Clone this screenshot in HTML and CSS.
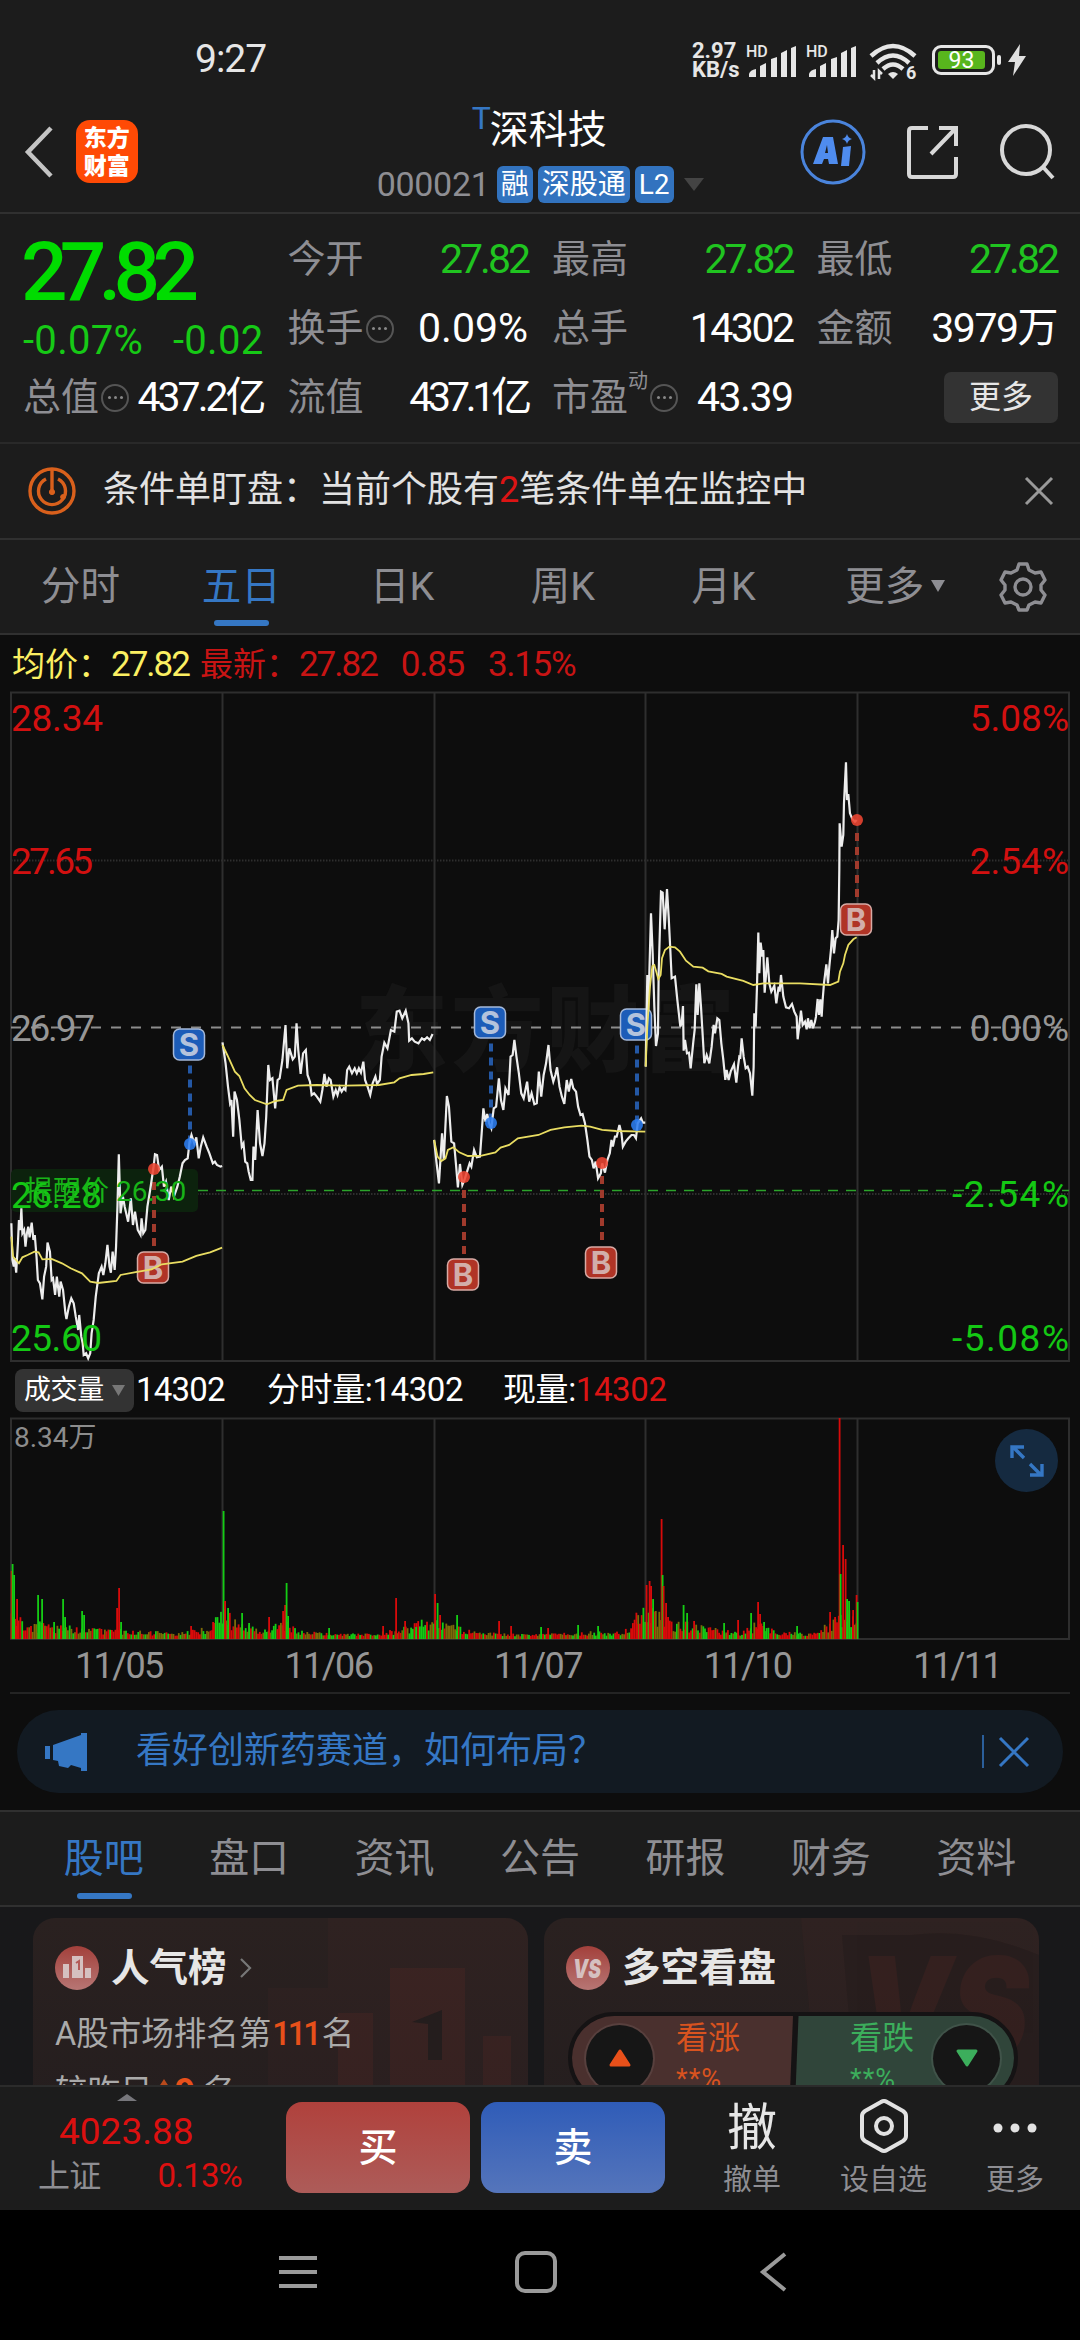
FILE: index.html
```html
<!DOCTYPE html>
<html lang="zh-CN">
<head>
  <meta charset="UTF-8" />
  <title>深科技 000021</title>
  <link rel="stylesheet" href="styles.css">
</head>
<body>
  <div class="phone">
    <div class="status-bar">
      <span class="time">9:27</span>
      <div class="status-icons">
        <div class="net-speed"><span>2.97</span><span>KB/s</span></div>
        <svg width="50" height="38" viewBox="0 0 50 38" fill="#e6e6e6">
          <text x="-2" y="16" class="hd">HD</text>
          <path d="M1 36v-3q1-4 7-5v8zM12 36V25l6-3v14zM23 36V18l6-2v20zM33 36V12l6-3v27zM43 36V7l5-2v31z"/>
        </svg>
        <svg class="sim2" width="50" height="38" viewBox="0 0 50 38" fill="#e6e6e6">
          <text x="-2" y="16" class="hd">HD</text>
          <path d="M1 36v-3q1-4 7-5v8zM12 36V25l6-3v14zM23 36V18l6-2v20zM33 36V12l6-3v27zM43 36V7l5-2v31z"/>
        </svg>
        <svg class="wifi" width="48" height="38" viewBox="0 0 48 38" fill="none" stroke="#e6e6e6" stroke-width="4.500">
          <path d="M2 15Q24-5 46 15M8 22Q24 7 40 22M14 28Q24 19 34 28"/>
          <path d="M24 38l-5-5q5-4 10 0z" fill="#e6e6e6" stroke="none"/>
          <path d="M5 29v8l-3-3M10 38v-8l3 3" stroke-width="2.500"/>
          <text x="37" y="38" class="wifi-gen">6</text>
        </svg>
        <div class="battery"><span>93</span></div>
        <svg class="bolt" width="18" height="32" viewBox="0 0 18 32" fill="#e0e0e0"><path d="M12 0L0 18h7L5 32 18 12h-7z"/></svg>
      </div>
    </div>

    <div class="header">
      <svg class="back" width="30" height="52" viewBox="0 0 30 52" fill="none" stroke="#c4c4c4" stroke-width="4.5"><path d="M27 2L4 26l23 24"/></svg>
      <div class="logo"><span>东方</span><span>财富</span></div>
      <div class="title">
        <div class="name"><sup>T</sup>深科技</div>
        <div class="code">
          <span class="num">000021</span>
          <span class="tag">融</span><span class="tag">深股通</span><span class="tag">L2</span>
          <svg class="caret" width="20" height="13" viewBox="0 0 20 13" fill="#444"><path d="M0 0h20L10 13z"/></svg>
        </div>
      </div>
      <div class="tools">
        <svg width="66" height="66" viewBox="0 0 66 66">
          <circle cx="33" cy="33" r="31" fill="none" stroke="#4a84dc" stroke-width="3"/>
          <path d="M23 18h10l5 27h-9l-1-5h-4l-2 5h-9zM27 26l-2 8h3z" fill="#4f8cee" fill-rule="evenodd"/>
          <path d="M43 28l8-1-2 20h-8z" fill="#4f8cee"/>
          <path d="M47 15q1 4 5 5-4 1-5 5-1-4-5-5 4-1 5-5z" fill="#4f8cee"/>
        </svg>
        <svg width="54" height="56" viewBox="0 0 54 56" fill="none" stroke="#d8d8d8" stroke-width="4">
          <path d="M22 4H6q-3 0-3 3v43q0 3 3 3h41q3 0 3-3V33M33 4h17v18M50 4L25 30"/>
        </svg>
        <svg width="56" height="58" viewBox="0 0 56 58" fill="none" stroke="#d8d8d8" stroke-width="4">
          <circle cx="26" cy="27" r="24"/><path d="M43 44l10 11"/>
        </svg>
      </div>
    </div>

    <div class="quote">
      <div class="price-main">
        <div class="price">27.82</div>
        <div class="change"><span>-0.07%</span><span>-0.02</span></div>
      </div>
      <div class="cell"><label>今开</label><b class="green n3">27.82</b></div>
      <div class="cell"><label>最高</label><b class="green n3">27.82</b></div>
      <div class="cell"><label>最低</label><b class="green n3">27.82</b></div>
      <div class="cell"><label>换手<i class="info"></i></label><b>0.09%</b></div>
      <div class="cell"><label>总手</label><b class="n2">14302</b></div>
      <div class="cell"><label>金额</label><b class="n1">3979万</b></div>
      <div class="cell"><label>总值<i class="info"></i></label><b class="n3">437.2亿</b></div>
      <div class="cell"><label>流值</label><b class="n4">437.1亿</b></div>
      <div class="cell"><label>市盈<sup>动</sup><i class="info"></i></label><b class="n1">43.39</b></div>
      <div class="cell end"><span class="more-btn">更多</span></div>
    </div>

    <div class="alert">
      <svg width="48" height="48" viewBox="0 0 48 48" fill="none" stroke="#d9601c" stroke-width="3.4">
        <circle cx="24" cy="24" r="22"/>
        <path d="M18 12a13.5 13.5 0 1 0 12 0M24 2v22"/>
        <circle cx="24" cy="25" r="2.6" fill="#d9601c" stroke-width="1"/><circle cx="35" cy="30" r="2.4" fill="#d9601c" stroke-width="1"/>
      </svg>
      <p>条件单盯盘：当前个股有<em>2</em>笔条件单在监控中</p>
      <svg width="28" height="28" viewBox="0 0 28 28" stroke="#999" stroke-width="3"><path d="M1 1l26 26M27 1L1 27"/></svg>
    </div>

    <div class="period-tabs">
      <span>分时</span><span class="on">五日</span><span>日K</span><span>周K</span><span>月K</span>
      <span class="more">更多<svg width="14" height="12" viewBox="0 0 14 12" fill="#8e8e93"><path d="M0 0h14L7 12z"/></svg></span>
      <svg class="gear" width="48" height="50" viewBox="0 0 48 50" fill="none" stroke="#8e8e93" stroke-width="3.4" stroke-linejoin="round">
        <path d="M20 2h8l2 6 6 3 6-1 4 8-4 5v5l4 5-4 8-6-1-6 3-2 5h-8l-2-5-6-3-6 1-4-8 4-5v-5l-4-5 4-8 6 1 6-3z"/>
        <circle cx="24" cy="25" r="8"/>
      </svg>
    </div>

    <div class="chart-area">
      <div class="legend">
        <span class="yellow">均价：<b>27.82</b></span>
        <span class="red">最新：<b>27.82</b><b>0.85</b><b>3.15%</b></span>
      </div>
      <svg class="price-chart" width="1080" height="670" viewBox="0 692 1080 670">
        <text x="355" y="1064" class="watermark" textLength="380">东方财富</text>
        <g class="grid">
          <path d="M10 692.5H1070M10 1361H1070M11 692V1361M222.5 692V1361M434.5 692V1361M645.5 692V1361M857.5 692V1361M1069 692V1361"/>
          <path d="M11 860.5H1069M11 1194H1069" stroke-dasharray="1.5 1.5"/>
        </g>
        <path d="M11 1027.5H1069" stroke="#8c8c8c" stroke-width="2" stroke-dasharray="10 10"/>
        <rect x="11" y="1169" width="187" height="43" rx="5" fill="#0c220d"/>
        <path d="M198 1190.5H1069" stroke="#2ba32b" stroke-width="1.4" stroke-dasharray="10 8"/>

        <g class="marks" id="marks"></g>
        <g class="price-line">
          <polyline transform="translate(0 1000) scale(.3444 .3333)" points="33,670 36,780 40,800 43,775 47,818 52,730 55,660 59,690 62,625 65,700 70,690 74,740 78,700 82,680 86,712 92,668 97,720 101,705 106,770 110,840 116,850 123,898 128,830 134,800 138,728 145,755 150,840 154,835 160,885 165,830 172,890 176,845 183,870 190,940 193,957 200,920 207,895 214,910 220,950 227,990 230,945 236,1010 240,1030 243,1065 250,1060 256,1075 262,1060 266,1000 272,960 278,890 287,820 295,800 300,825 306,790 312,735 318,800 322,818 327,755 333,810 337,740 341,620 345,463 350,640 357,590 362,620 372,665 380,595 386,675 392,635 400,690 408,705 411,655 416,700 422,690 428,620 436,570 446,500 450,463 456,465 462,510 470,500 476,560 482,545 490,600 497,560 505,590 515,560 522,530 530,490 537,480 545,475 550,430 556,405 564,430 570,412 577,475 583,440 590,412 600,440 608,460 618,490 624,485 630,495 640,500 645,498"/>
          <polyline transform="translate(0 1000) scale(.3444 .3333)" points="646,127 655,190 662,260 668,310 672,300 677,410 681,275 688,300 695,360 702,440 707,430 712,485 718,490 722,515 728,540 733,540 736,440 741,480 748,330 755,430 762,468 768,430 773,350 779,195 784,240 791,235 799,325 806,240 812,235 820,180 829,75 834,205 840,145 850,178 856,170 861,70 866,150 873,222 880,160 888,150 893,225 900,245 905,285 912,280 920,290 930,305 936,270 942,222 948,260 955,235 960,240 968,290 975,270 980,285 986,262 992,275 998,265 1003,270 1008,210 1014,200 1022,220 1030,205 1036,220 1042,205 1048,218 1055,185 1060,240 1068,262 1075,285 1082,250 1090,230 1095,252 1103,240 1108,170 1116,128 1125,145 1135,90 1145,95 1152,35 1160,32 1168,55 1178,32 1186,70 1188,122 1196,115 1204,125 1215,130 1225,115 1232,120 1240,112 1248,120 1256,102"/>
          <polyline transform="translate(430 960) scale(.3444 .3333)" points="12,540 18,600 26,670 35,520 40,600 49,408 55,440 62,545 70,550 76,620 81,682 87,612 94,675 100,660 106,640 115,610 120,620 128,570 136,592 145,590 150,520 155,445 161,485 166,462 172,490 178,505 185,445 192,440 200,355 206,420 213,450 219,385 228,405 234,290 240,285 245,240 251,290 258,340 265,400 272,415 282,365 288,425 295,400 303,433 310,430 316,335 323,410 330,345 337,310 344,255 350,330 358,365 364,345 369,322 376,380 383,410 390,432 397,360 403,395 410,357 416,385 424,395 430,440 437,465 443,462 450,490 457,540 463,590 470,600 475,625 481,605 488,655 496,640 500,610 508,638 515,600 522,580 527,540 531,560 537,530 542,530 550,495 556,520 560,560 568,545 576,535 585,525 592,525 598,535 603,490 613,475 618,488 625,488"/>
          <polyline transform="translate(600 720) scale(.3333)" points="137,1040 142,765 145,870 153,580 158,700 163,860 168,978 174,940 176,760 183,515 188,518 194,628 201,507 206,590 211,690 215,775 225,770 232,840 241,920 245,910 249,858 251,992 255,960 261,1000 267,998 272,1045 280,965 284,930 289,793 293,885 298,790 303,860 313,1030 320,1005 328,1030 335,980 341,915 345,940 352,895 358,900 364,970 370,1020 376,1080 380,1050 386,1080 392,1055 402,1033 409,1088 414,1040 418,1010 421,1012 425,955 431,1010 437,1045 443,1040 450,1060 457,1127 461,1040 463,880 467,920 471,800 475,638 478,760 482,668 487,710 490,690 494,818 502,712 508,790 514,815 523,797 529,850 536,800 539,815 543,765 550,830 558,862 567,865 576,852 583,875 590,890 593,958 600,900 603,872 608,915 615,905 620,928 624,895 629,925 634,900 639,925 645,905 648,890 653,837 657,885 661,838 665,890 668,840 672,790 679,733 684,790 688,740 693,690 697,630 702,700 707,655 712,650 716,600 718,450 719,310 725,380 730,345 732,250 738,127 741,240 745,222 750,280 757,297 765,305 770,300"/>
        </g>
        <g class="avg-line">
          <polyline transform="translate(0 1000) scale(.3444 .3333)" points="33,710 38,770 55,790 65,772 80,765 100,755 112,757 123,778 150,777 180,790 205,805 238,820 262,845 285,849 338,843 350,825 390,817 440,808 470,793 530,785 570,768 610,757 645,743"/>
          <polyline transform="translate(0 1000) scale(.3444 .3333)" points="646,135 660,165 682,215 695,228 710,265 725,285 740,300 775,313 800,303 822,300 832,270 865,257 920,255 1000,257 1100,255 1145,247 1160,235 1195,225 1230,222 1258,217"/>
          <polyline transform="translate(430 960) scale(.3444 .3333)" points="12,540 22,590 33,603 45,595 52,570 68,562 85,577 110,588 150,587 190,577 205,563 230,555 255,535 315,525 350,510 390,502 440,497 465,500 500,510 540,513 625,515"/>
          <polyline transform="translate(600 720) scale(.3333)" points="137,1040 142,920 150,800 157,738 163,735 175,777 182,765 186,715 195,690 208,680 225,682 240,695 258,722 280,740 308,743 325,754 365,762 380,770 430,783 460,795 490,790 600,790 690,795 715,785 720,755 730,730 735,705 745,675 760,658 770,652"/>
        </g>
        <g id="dots"></g>

        <g class="axis">
          <text x="11" y="731" class="up" textLength="92">28.34</text>
          <text x="11" y="874" class="up" textLength="82">27.65</text>
          <text x="11" y="1041" class="flat" textLength="84">26.97</text>
          <text x="11" y="1208" class="down" textLength="91">26.28</text>
          <text x="11" y="1351" class="down" textLength="91">25.60</text>
          <text x="25" y="1201" class="remind">提醒价 26.30</text>
          <g text-anchor="end">
            <text x="1069" y="731" class="up">5.08%</text>
            <text x="1069" y="874" class="up">2.54%</text>
            <text x="1069" y="1041" class="flat">0.00%</text>
            <text x="1069" y="1207" class="down" textLength="117">-2.54%</text>
            <text x="1069" y="1351" class="down" textLength="117">-5.08%</text>
          </g>
        </g>
      </svg>

      <div class="volume-legend">
        <span class="select">成交量<svg width="13" height="11" viewBox="0 0 13 11" fill="#777"><path d="M0 0h13L6.500 11z"/></svg></span>
        <span class="v1">14302</span>
        <span class="v2">分时量:14302</span>
        <span>现量:<em>14302</em></span>
      </div>
      <div class="volume">
        <svg width="1080" height="222" viewBox="0 1418 1080 222">
          <path class="grid" d="M10 1418.500H1070M10 1639H1070M11 1418V1639M222.500 1418V1639M434.500 1418V1639M645.500 1418V1639M857.500 1418V1639M1069 1418V1639"/>
          <g id="bars"></g>
          <text x="14" y="1447" class="vol-max">8.34万</text>
        </svg>
        <span class="expand">
          <svg width="34" height="34" viewBox="0 0 34 34" fill="none" stroke="#3577c4" stroke-width="3.400"><path d="M2 14V3h12M3 3l11 11M32 20v11H20M31 31L20 20"/></svg>
        </span>
      </div>
      <div class="dates"><span>11/05</span><span>11/06</span><span>11/07</span><span>11/10</span><span>11/11</span></div>

      <div class="banner">
        <svg width="42" height="38" viewBox="0 0 42 38" fill="#3577c4"><path d="M0 13h5v13H0zM8 12L36 2V0h6v38h-6v-3l-10-3-3 3-9-2-1-5-5-1z"/></svg>
        <p>看好创新药赛道，如何布局？</p>
        <svg class="close" width="48" height="34" viewBox="0 0 48 34" stroke="#3577c4" fill="none"><path d="M1 0v33" stroke-width="1.500"/><path d="M18 3l28 28M46 3L18 31" stroke-width="3"/></svg>
      </div>
    </div>

    <div class="info-tabs">
      <span class="on">股吧</span><span>盘口</span><span>资讯</span><span>公告</span><span>研报</span><span>财务</span><span>资料</span>
    </div>

    <div class="cards">
      <div class="card">
        <svg class="card-bg" width="260" height="168" viewBox="0 0 260 168"><path d="M60 0h200v168H0V70h60z" fill="#ff6a50" opacity=".025"/><path d="M70 95h35v73H70zM122 50h75v118h-75zM215 118h28v50h-28z" fill="#ff4030" opacity=".06"/><path d="M144 104l30-12v50h-14v-36z" fill="#241d1d"/></svg>
        <div class="card-title">
          <svg width="44" height="44" viewBox="0 0 44 44"><circle cx="22" cy="22" r="22" fill="url(#rg)"/><path d="M8 18h6v14H8zM17 10h11v22H17zM30 22h6v10h-6z" fill="#d5c0c0"/><path d="M21 17l3-2v9" fill="none" stroke="#b45b58" stroke-width="2"/>
            <defs><linearGradient id="rg" x2="0" y2="1"><stop stop-color="#a3403b"/><stop offset="1" stop-color="#b77674"/></linearGradient></defs></svg>
          <h3>人气榜</h3>
          <svg width="13" height="20" viewBox="0 0 13 20" fill="none" stroke="#777" stroke-width="2.200"><path d="M2 1l9 9-9 9"/></svg>
        </div>
        <p>A股市场排名第<em class="rank">111</em>名</p>
        <p class="second">较昨日<svg width="22" height="26" viewBox="0 0 22 26" fill="#b84a1c"><path d="M11 0l11 17h-6v9H6v-9H0z"/></svg><em class="big">9</em> 名</p>
      </div>
      <div class="card">
        <svg class="card-bg" width="260" height="168" viewBox="0 0 260 168"><path d="M22 0h238v168H37z" fill="#ff6a50" opacity=".025"/><path d="M63 17h70q60-8 127 20v131H76z" fill="#241d1d" opacity=".6"/><text x="78" y="140" class="vs-bg" textLength="172" lengthAdjust="spacingAndGlyphs">VS</text></svg>
        <div class="card-title">
          <svg width="44" height="44" viewBox="0 0 44 44"><circle cx="22" cy="22" r="22" fill="url(#rg)"/><text x="7" y="32" class="vs" textLength="28" lengthAdjust="spacingAndGlyphs">VS</text></svg>
          <h3>多空看盘</h3>
        </div>
        <div class="vote">
          <div class="bull"><i><svg width="22" height="18" viewBox="0 0 22 18"><path d="M11 2L20 16H2z" fill="#e8501a" stroke="#e8501a" stroke-width="3" stroke-linejoin="round"/></svg></i><span>看涨<br><small>**%</small></span></div>
          <div class="bear"><span>看跌<br><small>**%</small></span><i><svg width="22" height="18" viewBox="0 0 22 18"><path d="M11 16L20 2H2z" fill="#3cae5c" stroke="#3cae5c" stroke-width="3" stroke-linejoin="round"/></svg></i></div>
        </div>
      </div>
    </div>

    <div class="bottom-bar">
      <div class="index">
        <svg width="20" height="7" viewBox="0 0 20 7" fill="#77777c"><path d="M0 7h20L10 0z"/></svg>
        <div class="index-val">4023.88</div>
        <div class="index-row"><span>上证</span><b>0.13%</b></div>
      </div>
      <div class="trade buy">买</div>
      <div class="trade sell">卖</div>
      <div class="action a1"><span class="glyph">撤</span><label>撤单</label></div>
      <div class="action a2">
        <svg width="50" height="54" viewBox="0 0 50 54" fill="none" stroke="#e2e2e2" stroke-width="4" stroke-linejoin="round"><path d="M22 2q3-2 6 0l16 9q3 2 3 5v20q0 3-3 5l-16 9q-3 2-6 0L6 41q-3-2-3-5V16q0-3 3-5z"/><circle cx="25" cy="26" r="8"/></svg>
        <label>设自选</label>
      </div>
      <div class="action a3">
        <svg width="44" height="54" viewBox="0 0 44 54" fill="#e2e2e2"><circle cx="5" cy="28" r="4.500"/><circle cx="22" cy="28" r="4.500"/><circle cx="39" cy="28" r="4.500"/></svg>
        <label>更多</label>
      </div>
    </div>

    <div class="nav-bar">
      <svg width="38" height="34" viewBox="0 0 38 34" stroke="#9a9a9a" stroke-width="4"><path d="M0 3h38M0 17h38M0 31h38"/></svg>
      <svg class="home" width="42" height="42" viewBox="0 0 42 42" fill="none" stroke="#9a9a9a" stroke-width="4"><rect x="2" y="2" width="38" height="38" rx="8"/></svg>
      <svg width="27" height="40" viewBox="0 0 27 40" fill="none" stroke="#9a9a9a" stroke-width="4"><path d="M25 2L3 20l22 18"/></svg>
    </div>
  </div>

  <script src="chart.js"></script>
</body>
</html>
```

FILE: styles.css
```css
* {
  box-sizing: border-box;
}

body {
  margin: 0;
  background: #1c1c1c;
  color: #fff;
  font-family: Roboto, "Noto Sans CJK SC", sans-serif;
  line-height: 1.2;
}

svg {
  display: block;
  flex: none;
  overflow: visible;
}

p, h3 {
  margin: 0;
}

em, i {
  font-style: normal;
}

b {
  font-weight: 400;
}

.phone {
  width: 1080px;
  height: 2340px;
  overflow: hidden;
  display: flex;
  flex-direction: column;
}

.phone > div {
  flex: none;
}

/* status bar */
.status-bar {
  height: 100px;
  padding: 19px 54px 0 195px;
  display: flex;
  align-items: center;
  justify-content: space-between;
}

.time {
  font-size: 39px;
  letter-spacing: -1px;
  color: #e6e6e6;
}

.status-icons {
  display: flex;
  align-items: center;
  color: #e6e6e6;
}

.net-speed {
  display: flex;
  flex-direction: column;
  width: 56px;
  font-size: 22px;
  font-weight: 700;
  line-height: 19px;
}

.hd {
  font-size: 16px;
  font-weight: 500;
}

.sim2 {
  margin-left: 10px;
}

.wifi {
  margin-left: 11px;
}

.wifi-gen {
  font-size: 18px;
  font-weight: 700;
  fill: #e6e6e6;
  stroke: none;
}

.battery {
  position: relative;
  width: 63px;
  height: 30px;
  margin-left: 15px;
  padding: 3px;
  border: 3px solid #e6e6e6;
  border-radius: 9px;
}

.battery::after {
  content: "";
  position: absolute;
  right: -9px;
  top: 7px;
  width: 4px;
  height: 10px;
  border-radius: 2px;
  background: #e6e6e6;
}

.battery span {
  display: block;
  height: 18px;
  width: 47px;
  background: #58b51d;
  border-radius: 3px;
  color: #fff;
  font-size: 23px;
  line-height: 19px;
  text-align: center;
}

.bolt {
  margin-left: 13px;
}

/* header */
.header {
  height: 114px;
  padding: 0 24px 0 24px;
  display: flex;
  align-items: flex-start;
  border-bottom: 2px solid #303030;
}

.back {
  margin-top: 26px;
}

.logo {
  width: 62px;
  height: 63px;
  margin: 20px 0 0 22px;
  padding-top: 5px;
  border-radius: 14px;
  background: #ff4a05;
  display: flex;
  flex-direction: column;
  align-items: center;
  font-size: 23px;
  font-weight: 900;
  line-height: 28px;
}

.title {
  width: 340px;
  margin-left: 234px;
}

.name {
  padding-left: 100px;
  height: 58px;
  font-size: 39px;
  line-height: 60px;
  white-space: nowrap;
}

.name sup {
  display: inline-block;
  width: 18px;
  font-size: 32px;
  line-height: 30px;
  vertical-align: 14px;
  color: #3577c4;
}

.code {
  display: flex;
  align-items: center;
  gap: 5px;
  margin-top: 6px;
  padding-left: 5px;
}

.code .num {
  width: 115px;
  font-size: 34px;
  letter-spacing: -0.3px;
  color: #8e8e93;
}

.tag {
  height: 37px;
  padding: 0 4px;
  border-radius: 6px;
  background: #3273bf;
  font-size: 28px;
  line-height: 37px;
}

.caret {
  margin-left: 5px;
}

.tools {
  display: flex;
  align-items: center;
  gap: 40px;
  margin: 19px 0 0 90px;
}

/* quote */
.quote {
  height: 230px;
  padding: 11px 23px 0;
  display: grid;
  grid-template-columns: repeat(4, 240.5px);
  grid-auto-rows: 69px;
  column-gap: 24px;
  border-bottom: 2px solid #292929;
}

.price-main {
  grid-row: span 2;
  color: #00dc00;
}

.price {
  height: 87px;
  margin-left: -2px;
  font-size: 82px;
  font-weight: 500;
  line-height: 94px;
  letter-spacing: -7.8px;
}

.change {
  display: flex;
  justify-content: space-between;
  font-size: 40px;
  line-height: 58px;
  letter-spacing: 0.3px;
  color: #16c916;
}

.cell {
  display: flex;
  align-items: center;
  justify-content: space-between;
  white-space: nowrap;
}

.cell label {
  display: flex;
  align-items: center;
  font-size: 38px;
  color: #8e8e93;
}

.cell label sup {
  font-size: 20px;
  margin-bottom: 34px;
}

.cell b {
  font-size: 41px;
}

.cell .green {
  color: #20c420;
}

.cell .n1 { letter-spacing: -1.5px; }
.cell .n2 { letter-spacing: -2.5px; }
.cell .n3 { letter-spacing: -3px; }
.cell .n4 { letter-spacing: -4.2px; }

.info {
  width: 28px;
  height: 28px;
  margin-left: 2px;
  border: 2px solid #555;
  border-radius: 50%;
  display: flex;
  align-items: center;
  justify-content: center;
}

.info::before {
  content: "";
  width: 3px;
  height: 3px;
  border-radius: 50%;
  background: #888;
  box-shadow: -6px 0 #888, 6px 0 #888;
}

.cell.end {
  justify-content: flex-end;
}

.more-btn {
  width: 114px;
  height: 51px;
  margin-right: -1px;
  border-radius: 7px;
  background: #333;
  color: #e6e6e6;
  font-size: 32px;
  line-height: 51px;
  text-align: center;
}

/* alert */
.alert {
  height: 96px;
  padding: 0 27px 0 28px;
  display: flex;
  align-items: center;
  border-bottom: 2px solid #303030;
  color: #e2e2e2;
  font-size: 36px;
}

.alert p {
  flex: 1;
  margin-left: 27px;
  white-space: nowrap;
}

.alert em {
  color: #dc1414;
}

/* tabs */
.period-tabs {
  height: 95px;
  padding-right: 33px;
  display: flex;
  align-items: center;
  border-bottom: 2px solid #303030;
  color: #8e8e93;
  font-size: 39.500px;
}

.period-tabs span {
  width: 161px;
  text-align: center;
}

.period-tabs .more {
  width: 195px;
  padding-left: 41px;
  display: flex;
  align-items: center;
  gap: 7px;
}

.on {
  position: relative;
  color: #3577c4;
}

.on::after {
  content: "";
  position: absolute;
  left: 50%;
  bottom: -16px;
  width: 55px;
  height: 6px;
  margin-left: -27px;
  border-radius: 3px;
  background: #3577c4;
}

/* chart */
.chart-area {
  height: 1175px;
  background: #0d0d0d;
}

.legend {
  height: 57px;
  padding: 2px 12px 0;
  display: flex;
  align-items: center;
  gap: 11px;
  font-size: 33px;
}

.legend b {
  font-size: 35px;
  letter-spacing: -2px;
}

.legend b + b {
  margin-left: 24px;
  letter-spacing: -1.3px;
}

.yellow { color: #fbef62; }
.red { color: #c81414; }

.grid {
  fill: none;
  stroke: #2e2e2e;
  stroke-width: 2;
}

.watermark {
  font-size: 93px;
  font-weight: 900;
  fill: #151515;
}

.price-line polyline {
  fill: none;
  stroke: #ededed;
  stroke-width: 2.2;
  vector-effect: non-scaling-stroke;
}

.avg-line polyline {
  fill: none;
  stroke: #e9dd62;
  stroke-width: 1.8;
  vector-effect: non-scaling-stroke;
}

.axis {
  font-size: 37px;
}

.axis .up { fill: #d21010; }
.axis .flat { fill: #969696; }
.axis .down { fill: #14c814; }

.axis .remind {
  font-size: 28px;
  fill: #18b418;
}

.mark-letter {
  font: 700 31px Inter, sans-serif;
}

.volume-legend {
  height: 56px;
  padding-left: 15px;
  display: flex;
  align-items: center;
  font-size: 33px;
  letter-spacing: -0.4px;
}

.volume-legend .select {
  width: 119px;
  height: 43px;
  padding-left: 9px;
  display: flex;
  align-items: center;
  gap: 8px;
  border-radius: 8px;
  background: #333;
  font-size: 27px;
}

.volume-legend .v1 {
  width: 131px;
  margin-left: 2px;
  letter-spacing: -0.8px;
}

.volume-legend .v2 {
  width: 236px;
}

.volume-legend em {
  color: #dc1414;
}

.volume {
  position: relative;
}

.vol-max {
  font-size: 28px;
  fill: #8c8c8c;
}

.expand {
  position: absolute;
  left: 995px;
  top: 11px;
  width: 63px;
  height: 63px;
  border-radius: 50%;
  background: #152a40;
  display: flex;
  align-items: center;
  justify-content: center;
}

.dates {
  height: 54px;
  margin: 0 10px;
  padding: 2px 8px 0 4px;
  display: flex;
  align-items: center;
  border-bottom: 2px solid #242424;
  color: #969696;
  font-size: 36px;
  letter-spacing: -1.6px;
}

.dates span {
  flex: 1;
  text-align: center;
}

.banner {
  height: 83px;
  margin: 16px 17px 0;
  padding: 0 33px 0 28px;
  display: flex;
  align-items: center;
  border-radius: 42px;
  background: #121a22;
  color: #3577c4;
  font-size: 36px;
}

.banner p {
  flex: 1;
  margin-left: 49px;
}

.info-tabs {
  height: 97px;
  padding: 0 31px;
  display: flex;
  align-items: center;
  border-top: 2px solid #303030;
  border-bottom: 2px solid #303030;
  color: #8e8e93;
  font-size: 40px;
}

.info-tabs span {
  flex: 1;
  text-align: center;
}

/* cards */
.cards {
  height: 178px;
  padding: 11px 41px 0 33px;
  display: flex;
  gap: 16px;
  background: #18181a;
  overflow: hidden;
}

.card {
  position: relative;
  width: 495px;
  height: 260px;
  padding: 28px 22px;
  border-radius: 22px;
  background: linear-gradient(#2a2120, #231d1e);
  color: #aaa;
  font-size: 32.5px;
  overflow: hidden;
}

.card-bg {
  position: absolute;
  right: 0;
  top: 0;
}

.vs-bg {
  font: italic 900 140px Inter, sans-serif;
  fill: #ff4030;
  opacity: 0.06;
}

.vs {
  font: italic 900 26px Inter, sans-serif;
  fill: #d5c0c0;
}

.card-title {
  height: 44px;
  display: flex;
  align-items: center;
  gap: 12px;
  color: #e6e6e6;
}

.card-title h3 {
  font-size: 38.5px;
  font-weight: 700;
  white-space: nowrap;
}

.card p {
  position: relative;
  margin-top: 20px;
  line-height: 48px;
}

.card p.second {
  display: flex;
  align-items: center;
  margin-top: 10px;
}

.card em {
  color: #e8501a;
}

.card .rank {
  letter-spacing: -3px;
  margin: 0 3px 0 1px;
  font-weight: 500;
}

.card .big {
  font-size: 36px;
  font-weight: 700;
  margin-right: 8px;
}

.vote {
  position: relative;
  width: 450px;
  height: 92px;
  margin: 22px 0 0 2px;
  border: 4px solid #151314;
  border-radius: 46px;
  background: #151314;
  display: flex;
  overflow: hidden;
}

.bull, .bear {
  flex: 1;
  display: flex;
  align-items: center;
  padding: 0 14px;
  background: #4a302e;
  color: #d9531f;
  clip-path: polygon(0 0, 100% 0, 98.5% 100%, 0 100%);
}

.bear {
  justify-content: flex-end;
  background: #30453a;
  color: #3cae5c;
  clip-path: polygon(2.5% 0, 100% 0, 100% 100%, 1% 100%);
}

.vote i {
  width: 67px;
  height: 67px;
  flex: none;
  border-radius: 50%;
  background: #161616;
  box-shadow: 0 0 0 2px rgba(255, 255, 255, 0.08);
  display: flex;
  align-items: center;
  justify-content: center;
}

.vote span {
  width: 70px;
  margin: 1px 0 0 23px;
  font-size: 32px;
  line-height: 39px;
}

.bear span {
  margin-right: 13px;
}

.vote small {
  font-size: 27px;
  letter-spacing: 1px;
}

/* bottom bar */
.bottom-bar {
  height: 125px;
  border-top: 2px solid #2b2b2b;
  background: #1c1c1c;
  display: flex;
  align-items: flex-start;
}

.index {
  width: 286px;
  padding: 7px 44px 0 38px;
  color: #dc1010;
}

.index > svg {
  margin-left: 79px;
}

.index-val {
  margin: 10px 0 0 21px;
  font-size: 37px;
  line-height: 42px;
}

.index-row {
  display: flex;
  justify-content: space-between;
  font-size: 33px;
  line-height: 46px;
  letter-spacing: -0.8px;
}

.index-row span {
  font-size: 32px;
  color: #8e8e93;
}

.trade {
  width: 184px;
  height: 91px;
  margin: 15px 11px 0 0;
  border-radius: 16px;
  font-size: 39px;
  font-weight: 500;
  line-height: 92px;
  text-align: center;
}

.buy { background: linear-gradient(#b0413c, #ad5c59); }
.sell { background: linear-gradient(#2f5cb8, #5575bb); }

.action {
  display: flex;
  flex-direction: column;
  align-items: center;
  padding-top: 13px;
}

.action label {
  margin-top: 6px;
  font-size: 29px;
  line-height: 41px;
  color: #8e8e93;
}

.action .glyph {
  height: 54px;
  font-size: 50px;
  line-height: 56px;
  color: #e6e6e6;
}

.a1 { margin-left: 47px; }
.a2 { margin-left: 59px; }
.a3 { margin-left: 59px; }

.nav-bar {
  height: 130px;
  padding: 0 293px 7px 279px;
  background: #000;
  display: flex;
  align-items: center;
  justify-content: space-between;
}

.home {
  margin-right: 5px;
}
```

FILE: chart.js
```js
// buy / sell marks: badge position, then the dot on the price line
var marks = [
  ['S', 189, 1044.5, 190, 1144],
  ['B', 153, 1267.5, 154, 1169],
  ['S', 490, 1022.5, 491, 1123],
  ['S', 636, 1024.5, 637, 1125],
  ['B', 463, 1274.5, 464, 1177],
  ['B', 601, 1262.5, 602, 1163],
  ['B', 856, 919.5, 857, 820]
];

var badges = '';
var dots = '';
marks.forEach(function (m) {
  var sell = m[0] === 'S';
  var fill = sell ? '#1c5cb8' : '#b03426';
  var from = sell ? m[2] + 21 : m[4] + 13;
  var to = sell ? m[4] : m[2] - 20;
  badges += '<path d="M' + m[3] + ' ' + from + 'V' + to + '" stroke="' + (sell ? '#2458a5' : '#a03a2c') + '" stroke-width="4" stroke-dasharray="8 6"/>' +
    '<rect x="' + (m[1] - 15.5) + '" y="' + (m[2] - 15.5) + '" width="31" height="31" rx="6" fill="' + fill + '" stroke="' + (sell ? '#a5b9d9' : '#d7aaa5') + '" stroke-width="1.5"/>' +
    '<text x="' + m[1] + '" y="' + (m[2] + 11) + '" text-anchor="middle" class="mark-letter" fill="' + (sell ? '#b4c3dc' : '#d2aeaa') + '">' + m[0] + '</text>';
  dots += '<circle cx="' + m[3] + '" cy="' + m[4] + '" r="6" fill="' + (sell ? '#2c7df0' : '#ee4632') + '" fill-opacity=".88"/>';
});
document.getElementById('marks').innerHTML = badges;
document.getElementById('dots').innerHTML = dots;

// usual volume level along the x axis
var level = [[11, 28], [25, 17], [60, 13], [100, 10], [130, 8], [175, 5], [210, 12], [222, 30], [240, 17], [260, 7], [285, 20],
  [300, 8], [330, 4], [370, 4], [400, 9], [434, 22], [450, 14], [475, 6], [530, 3], [590, 6], [620, 6], [645, 34], [665, 22],
  [700, 12], [740, 5], [760, 18], [780, 6], [815, 5], [835, 20], [850, 30], [858, 32]];

var spikes = [[11.5, 68, 'r'], [12.5, 75, 'g'], [14, 64, 'g'], [17, 40, 'r'], [38, 44, 'g'], [42, 40, 'g'], [54, 17, 'g'], [63, 40, 'g'], [65, 22, 'g'],
  [82, 28, 'g'], [84, 24, 'g'], [117, 31, 'r'], [119, 51, 'r'], [121, 17, 'g'], [191, 13, 'r'], [213, 17, 'r'], [223.5, 128, 'g'], [225, 38, 'r'],
  [228, 31, 'g'], [242, 26, 'g'], [249, 16, 'g'], [269, 22, 'r'], [283, 28, 'r'], [285, 34, 'r'], [286.5, 56, 'g'], [288, 23, 'g'],
  [329, 11, 'g'], [383, 13, 'r'], [396, 41, 'r'], [405, 18, 'r'], [416, 12, 'g'], [435, 45, 'r'], [437.5, 36, 'g'], [440, 24, 'r'],
  [457, 24, 'g'], [499, 18, 'r'], [511, 13, 'r'], [541, 12, 'g'], [548, 11, 'r'], [578, 14, 'g'], [598, 13, 'g'], [637, 15, 'r'],
  [646.5, 54, 'r'], [649.5, 58, 'r'], [651, 53, 'r'], [653, 40, 'g'], [661.5, 120, 'r'], [662.5, 64, 'g'], [663.5, 53, 'r'],
  [666, 36, 'r'], [683.5, 34, 'g'], [687, 26, 'g'], [694, 18, 'r'], [724, 16, 'g'], [738, 19, 'r'], [751, 26, 'g'], [758, 37, 'r'],
  [760, 25, 'r'], [764, 17, 'g'], [797, 13, 'g'], [830, 27, 'r'], [835, 22, 'r'], [839.5, 221, 'r'], [840.5, 65, 'g'], [843, 94, 'r'],
  [845.5, 80, 'r'], [847, 40, 'g'], [849, 38, 'g'], [853, 29, 'r'], [856.5, 44, 'r'], [857.5, 37, 'g']];

var seed = 21;
function rand() {
  seed = (seed * 16807) % 2147483647;
  return seed / 2147483647;
}

function levelAt(x) {
  for (var i = 1; i < level.length; i++) {
    if (x <= level[i][0]) {
      var a = level[i - 1], b = level[i];
      return a[1] + (b[1] - a[1]) * (x - a[0]) / (b[0] - a[0]);
    }
  }
  return 0;
}

var colors = { r: '#d80a0a', g: '#14cc14', m: '#7c6a08' };
function bar(x, h, c) {
  return '<rect x="' + (x - 0.8).toFixed(1) + '" y="' + (1639 - h).toFixed(1) + '" width="1.8" height="' + h.toFixed(1) + '" fill="' + colors[c] + '"/>';
}

var out = '';
for (var x = 11.5; x < 857; x += 1.76) {
  var r = rand();
  out += bar(x, 1.5 + levelAt(x) * (0.3 + rand() * 0.75), r < 0.38 ? 'r' : r < 0.66 ? 'g' : 'm');
}
spikes.forEach(function (s) {
  out += bar(s[0], s[1], s[2]);
});
document.getElementById('bars').innerHTML = out;
```
